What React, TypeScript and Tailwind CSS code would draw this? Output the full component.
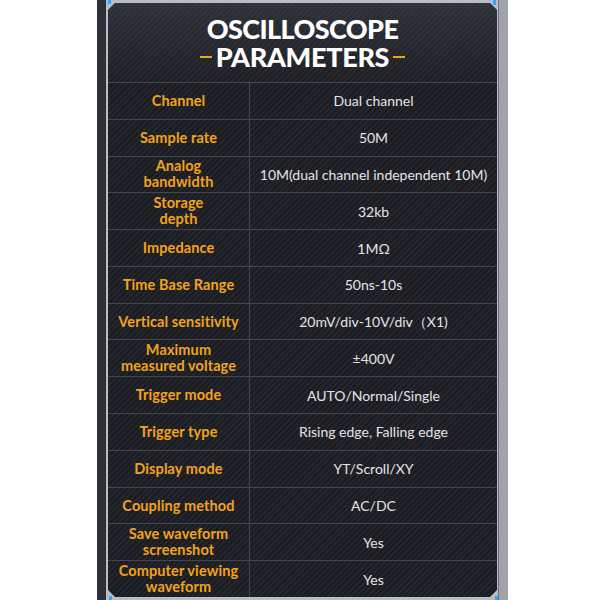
import React from 'react';

const rows: { label: string[]; value: string }[] = [
  { label: ['Channel'], value: 'Dual channel' },
  { label: ['Sample rate'], value: '50M' },
  { label: ['Analog', 'bandwidth'], value: '10M(dual channel independent 10M)' },
  { label: ['Storage', 'depth'], value: '32kb' },
  { label: ['Impedance'], value: '1MΩ' },
  { label: ['Time Base Range'], value: '50ns-10s' },
  { label: ['Vertical sensitivity'], value: '20mV/div-10V/div（X1)' },
  { label: ['Maximum', 'measured voltage'], value: '±400V' },
  { label: ['Trigger mode'], value: 'AUTO/Normal/Single' },
  { label: ['Trigger type'], value: 'Rising edge, Falling edge' },
  { label: ['Display mode'], value: 'YT/Scroll/XY' },
  { label: ['Coupling method'], value: 'AC/DC' },
  { label: ['Save waveform', 'screenshot'], value: 'Yes' },
  { label: ['Computer viewing', 'waveform'], value: 'Yes' },
];

export default function App() {
  return (
    <div className="w-[600px] h-[600px] bg-white flex font-['Lato','Noto_Sans',sans-serif]">
      <div className="relative ml-[97px] w-[411px] h-full flex bg-[#2a2f39]">
        {/* blue corner accents */}
        <div className="absolute left-[11px] top-0 w-[3px] h-[4px] bg-[#2aa8ff]" />
        <div className="absolute left-[396px] top-0 w-[3px] h-[5px] bg-[#2aa8ff]" />
        <div className="absolute left-[12px] bottom-0 w-[3px] h-[4px] bg-[#2aa8ff]" />
        <div className="absolute left-[398px] bottom-0 w-[3px] h-[4px] bg-[#2aa8ff]" />

        <div className="w-[9px]" />
        <div className="w-[392px] flex flex-col bg-[#b9bdc6] pl-[2px] pr-[1px] pt-[3px] pb-[3px]">
          <div className="flex-1 flex flex-col [clip-path:polygon(7px_0,calc(100%_-_7px)_0,100%_7px,100%_calc(100%_-_7px),calc(100%_-_7px)_100%,7px_100%,0_calc(100%_-_7px),0_7px)] bg-[repeating-linear-gradient(135deg,#1b1c21_0px,#1b1c21_2px,#25262c_2px,#25262c_4px)]">
            {/* Header */}
            <div className="h-[79px] flex flex-col items-center pt-[12px] bg-[linear-gradient(180deg,rgba(70,74,86,0.45),rgba(40,42,50,0.1))]">
              <div className="text-white font-black text-[27px] leading-[28px] tracking-[-0.6px]">OSCILLOSCOPE</div>
              <div className="flex items-center gap-[4px]">
                <div className="w-[12px] h-[2px] bg-[#f0a31c]" />
                <div className="text-white font-black text-[27px] leading-[28px] tracking-[-0.3px]">PARAMETERS</div>
                <div className="w-[12px] h-[2px] bg-[#f0a31c]" />
              </div>
            </div>

            {/* Table */}
            <div className="flex-1 grid grid-rows-[repeat(14,1fr)]">
              {rows.map((r, i) => (
                <div key={i} className="grid grid-cols-[141px_1fr] border-t border-[#44464d]">
                  <div className="flex flex-col items-center justify-center text-[#f2a31a] font-bold text-[14.5px] leading-[16px] tracking-[0.1px] text-center">
                    {r.label.map((l, j) => (
                      <span key={j}>{l}</span>
                    ))}
                  </div>
                  <div className="flex items-center justify-center border-l border-[#44464d] text-[#e4e4e6] text-[14px]">
                    {r.value}
                  </div>
                </div>
              ))}
            </div>
          </div>
        </div>
        <div className="w-[10px] bg-[#a1a2aa] border-l border-[#6d6f77]" />
      </div>
    </div>
  );
}
